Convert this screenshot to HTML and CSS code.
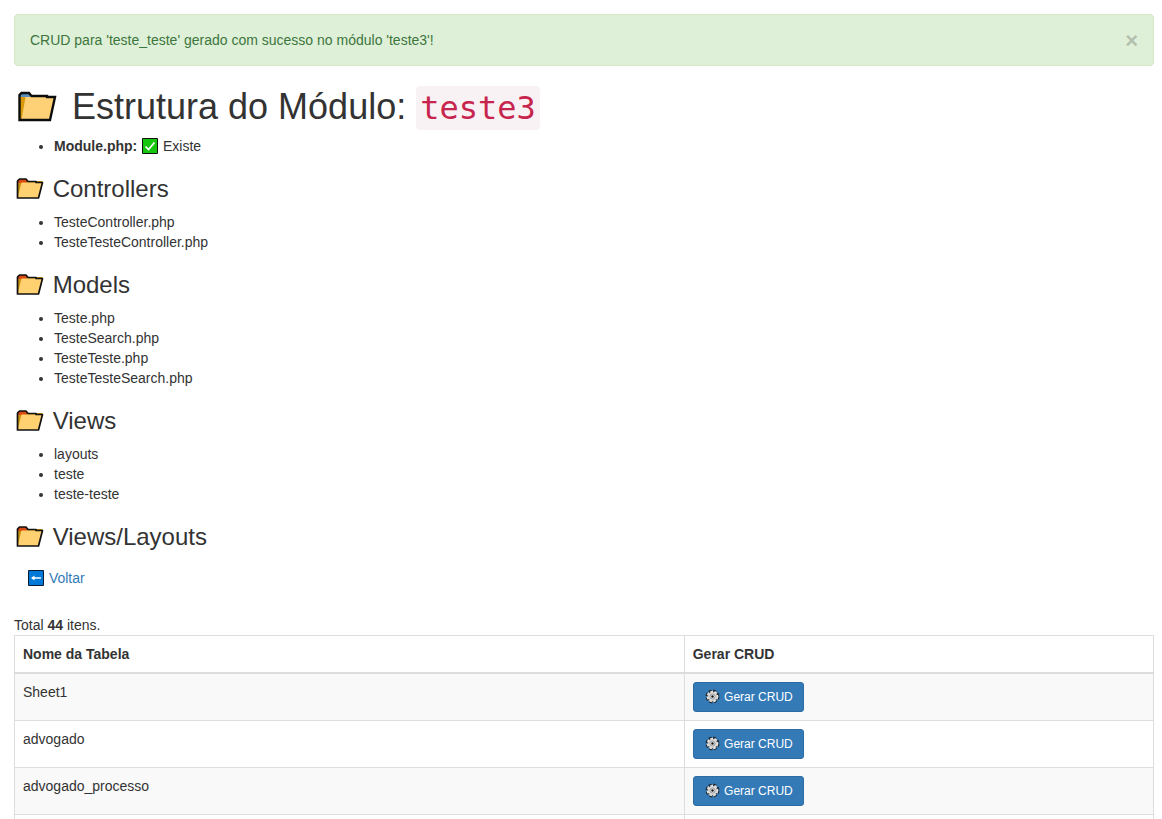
FILE: index.html
```html
<!DOCTYPE html>
<html lang="pt-BR">
<head>
<meta charset="utf-8">
<title>Estrutura do Módulo</title>
<link rel="stylesheet" href="styles.css">
</head>
<body>
<svg class="sprite" aria-hidden="true">
  <symbol id="folder-open" viewBox="0 0 32 24">
    <path d="M3.5 21V3.5L5 2h7l2 2h14.5v3" fill="#c8920e"/>
    <path d="M4 5V3.500L5.500 2h6L13 4v2H4z" fill="#d9480f"/>
    <path d="M3.500 21L7.500 5.500H28.500L24.500 21z" fill="#ffd170"/>
    <path d="M3.500 21V4L5.500 2h6.500l2 2.500h8V5.500H28.500L24.500 21z" fill="none" stroke="#111" stroke-width="1.700" stroke-linejoin="round"/>
  </symbol>
  <symbol id="gear" viewBox="0 0 16 16">
    <circle cx="8" cy="8" r="5.600" fill="none" stroke="#222" stroke-width="3.600" stroke-dasharray="2.900 1.500"/>
    <circle cx="8" cy="8" r="5.200" fill="#ddd" stroke="#222" stroke-width=".6"/>
    <circle cx="8" cy="8" r="5.300" fill="none" stroke="#e4e4e4" stroke-width="1.800" stroke-dasharray="2.900 1.500"/>
    <circle cx="8" cy="8" r="2.700" fill="#f4f4f4" stroke="#777" stroke-width=".8"/>
    <circle cx="8" cy="8" r="1.300" fill="#111"/>
  </symbol>
</svg>
<main class="container">
  <div class="alert" role="alert">
    <span>CRUD para 'teste_teste' gerado com sucesso no módulo 'teste3'!</span>
    <button class="close" type="button" aria-label="Fechar">×</button>
  </div>

  <h1 class="title">
    <svg class="icon-title" viewBox="0 0 48 36" aria-hidden="true">
      <path d="M5.500 31V5.500L7.500 3.500h7l2 2.500v3z" fill="#5b8fc0"/>
      <path d="M5.500 31V8H13L8.500 31z" fill="#d69a0c"/>
      <path d="M7.500 31L11.500 8H41L36 31z" fill="#ffd176"/>
      <path d="M5.500 31V6L7.500 4h7.500l2.500 3H33v1h8L36 31z" fill="none" stroke="#0c0c0c" stroke-width="2.400"/>
    </svg>
    Estrutura do Módulo: <code class="code">teste3</code>
  </h1>
  <ul class="files">
    <li><strong>Module.php:</strong>
      <svg class="icon-text" viewBox="0 0 18 18" aria-hidden="true"><path d="M1.500 1.500h15v15h-15z" fill="#16c60c" stroke="#111"/><path d="M4.500 9.500l3 3 6-7" fill="none" stroke="#fff" stroke-width="1.700"/></svg>
      Existe</li>
  </ul>

  <h3 class="heading"><svg class="icon-heading" aria-hidden="true"><use href="#folder-open"/></svg> Controllers</h3>
  <ul class="files">
    <li>TesteController.php</li>
    <li>TesteTesteController.php</li>
  </ul>

  <h3 class="heading"><svg class="icon-heading" aria-hidden="true"><use href="#folder-open"/></svg> Models</h3>
  <ul class="files">
    <li>Teste.php</li>
    <li>TesteSearch.php</li>
    <li>TesteTeste.php</li>
    <li>TesteTesteSearch.php</li>
  </ul>

  <h3 class="heading"><svg class="icon-heading" aria-hidden="true"><use href="#folder-open"/></svg> Views</h3>
  <ul class="files">
    <li>layouts</li>
    <li>teste</li>
    <li>teste-teste</li>
  </ul>

  <h3 class="heading"><svg class="icon-heading" aria-hidden="true"><use href="#folder-open"/></svg> Views/Layouts</h3>

  <a class="back" href="#">
    <svg class="icon-text" viewBox="0 0 18 18" aria-hidden="true"><path d="M1.500 1.500h15v15h-15z" fill="#0078d7" stroke="#0b1a33"/><path d="M5 9h9" stroke="#fff" stroke-width="1.500"/><path d="M4 9l3.500-2.500v5z" fill="#fff"/></svg>
    Voltar</a>

  <div class="summary">Total <b>44</b> itens.</div>
  <table class="grid">
    <thead>
      <tr><th class="name">Nome da Tabela</th><th>Gerar CRUD</th></tr>
    </thead>
    <tbody>
      <tr><td>Sheet1</td><td><button class="btn" type="button"><svg class="icon-btn" aria-hidden="true"><use href="#gear"/></svg> Gerar CRUD</button></td></tr>
      <tr><td>advogado</td><td><button class="btn" type="button"><svg class="icon-btn" aria-hidden="true"><use href="#gear"/></svg> Gerar CRUD</button></td></tr>
      <tr><td>advogado_processo</td><td><button class="btn" type="button"><svg class="icon-btn" aria-hidden="true"><use href="#gear"/></svg> Gerar CRUD</button></td></tr>
      <tr><td></td><td></td></tr>
    </tbody>
  </table>
</main>
</body>
</html>
```
FILE: styles.css
```css
* {
  box-sizing: border-box;
}

body {
  margin: 0;
  font: 14px/20px "Liberation Sans", Arial, sans-serif;
  color: #333;
  background: #fff;
}

.sprite {
  display: none;
}

.container {
  padding: 14px 8px 0 14px;
}

.alert {
  display: flex;
  justify-content: space-between;
  padding: 15px;
  margin-bottom: 20px;
  color: #3c763d;
  background: #dff0d8;
  border: 1px solid #d6e9c6;
  border-radius: 4px;
}

.close {
  padding: 0;
  border: 0;
  background: none;
  font: bold 22px/22px "Liberation Sans", Arial, sans-serif;
  height: 22px;
  margin-bottom: -2px;
  color: #000;
  opacity: 0.2;
  cursor: pointer;
}

.title,
.heading {
  font-weight: 500;
  margin: 20px 0 10px;
}

.title {
  margin-top: 22px;
  font-size: 36px;
  line-height: 38px;
}

.heading {
  font-size: 24px;
  line-height: 26px;
}

.code {
  padding: 3px 4px;
  font-family: "DejaVu Sans Mono", monospace;
  font-size: 32px;
  line-height: 1;
  color: #c7254e;
  background: #f9f2f4;
  border-radius: 4px;
}

.files {
  margin: 0 0 10px;
  padding-left: 40px;
}

.icon-title {
  width: 48px;
  height: 36px;
  vertical-align: -6px;
}

.icon-heading {
  width: 32px;
  height: 24px;
  vertical-align: -4px;
}

.icon-text {
  width: 18px;
  height: 18px;
  vertical-align: -4px;
}

.icon-btn {
  width: 17px;
  height: 15px;
  vertical-align: -3px;
}

.back {
  display: inline-block;
  padding: 8px 13px 7px;
  margin-bottom: 20px;
  color: #337ab7;
  text-decoration: none;
}

.grid {
  width: 100%;
  border-collapse: collapse;
}

.grid th,
.grid td {
  padding: 8px;
  border: 1px solid #ddd;
  text-align: left;
  vertical-align: top;
}

.grid th {
  border-bottom-width: 2px;
}

.grid tbody tr:nth-child(odd) {
  background: #f9f9f9;
}

.grid .name {
  width: 58.8%;
}

.btn {
  display: block;
  padding: 5px 10px;
  font: 12px/18px "Liberation Sans", Arial, sans-serif;
  color: #fff;
  background: #337ab7;
  border: 1px solid #2e6da4;
  border-radius: 3px;
  cursor: pointer;
}
```
